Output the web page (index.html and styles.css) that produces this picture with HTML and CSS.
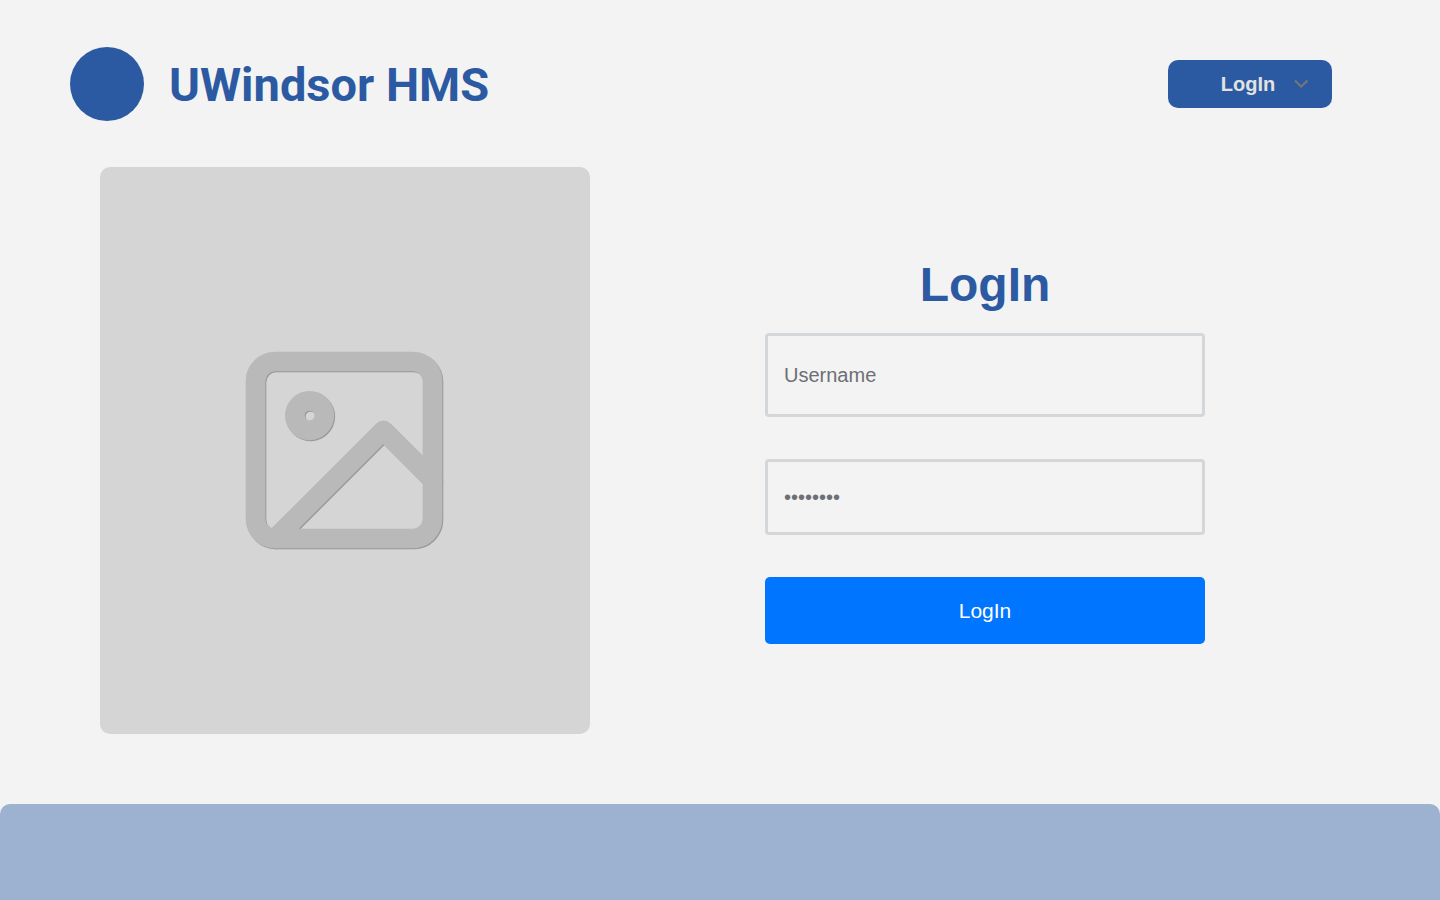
FILE: index.html
```html
<!DOCTYPE html>
<html lang="en">
<head>
<meta charset="utf-8">
<meta name="viewport" content="width=device-width, initial-scale=1">
<title>UWindsor HMS</title>
<link rel="stylesheet" href="styles.css">
</head>
<body>
<header class="header">
  <div class="brand">
    <span class="brand-mark"></span>
    <span class="brand-name">UWindsor HMS</span>
  </div>
  <div class="account">
    <select class="account-select" aria-label="Account">
      <option>LogIn</option>
    </select>
    <svg class="account-arrow" viewBox="0 0 16 16" aria-hidden="true"><path d="M2 4.500l6.200 6.200 6.200-6.200"/></svg>
  </div>
</header>
<main class="main">
  <div class="picture">
    <svg class="picture-icon" viewBox="0 0 24 24" aria-hidden="true">
      <rect x="3" y="3" width="18" height="18" rx="2"/>
      <circle cx="8.5" cy="8.5" r="1.5"/>
      <path d="M21 15l-5-5L5 21"/>
    </svg>
  </div>
  <form class="login">
    <h1 class="login-title">LogIn</h1>
    <input class="field field-user" type="text" placeholder="Username" aria-label="Username">
    <input class="field field-password" type="password" placeholder="••••••••" aria-label="Password">
    <button class="submit" type="submit">LogIn</button>
  </form>
</main>
<footer class="footer"></footer>
</body>
</html>
```
FILE: styles.css
```css
* { box-sizing: border-box; }

body {
  margin: 0;
  min-height: 100vh;
  display: flex;
  flex-direction: column;
  background: #f3f3f3;
  color: #2b5aa2;
  font-family: "Liberation Sans", Arial, sans-serif;
}

.header {
  display: flex;
  justify-content: space-between;
  align-items: center;
  padding: 47px 108px 46px 70px;
}

.brand {
  display: flex;
  align-items: center;
  gap: 25px;
}

.brand-mark {
  width: 74px;
  height: 74px;
  border-radius: 50%;
  background: #2b5aa2;
}

.brand-name {
  padding-top: 2px;
  font: bold 47px/56px Roboto, sans-serif;
}

.account { position: relative; }

.account-select {
  display: block;
  width: 164px;
  height: 48px;
  padding: 0 20px 0 16px;
  border: 0;
  border-radius: 10px;
  appearance: none;
  background: #2b5aa2;
  color: #e2e2e2;
  font: bold 20px/24px "Liberation Sans", Arial, sans-serif;
  text-align: center;
  text-align-last: center;
}

.account-arrow {
  position: absolute;
  top: 16px;
  right: 23px;
  width: 16px;
  height: 16px;
  fill: none;
  stroke: #777;
  stroke-width: 2;
  pointer-events: none;
}

.main {
  display: flex;
  flex-wrap: wrap;
  padding: 0 60px 70px 100px;
}

.picture {
  flex: 0 1 490px;
  display: flex;
  align-items: center;
  justify-content: center;
  padding: 165px 2px 166px 0;
  border-radius: 10px;
  background: #d5d5d5;
}

.picture-icon {
  width: 236px;
  height: 236px;
  fill: none;
  stroke: #b9b9b9;
  stroke-width: 2;
  stroke-linecap: round;
  stroke-linejoin: round;
  filter: drop-shadow(1px 1px 0 #999);
}

.login {
  flex: 0 1 440px;
  display: flex;
  flex-direction: column;
  margin: 0 auto;
  padding-top: 88px;
}

.login-title {
  margin: 0 0 18px;
  font-size: 48px;
  line-height: 60px;
  text-align: center;
}

.field {
  width: 100%;
  margin: 0 0 42px;
  padding: 0 16px;
  border: 3px solid #d3d7da;
  border-radius: 4px;
  background: transparent;
  color: #6c6f75;
  font: 20px/24px "Liberation Sans", Arial, sans-serif;
}

.field::placeholder {
  color: #6c6f75;
  opacity: 1;
}

.field-user { height: 84px; }
.field-password { height: 76px; }

.submit {
  height: 67px;
  border: 0;
  border-radius: 5px;
  background: #0075ff;
  color: #fff;
  font: 21px/24px "Liberation Sans", Arial, sans-serif;
}

.footer {
  flex: 1 0 96px;
  border-radius: 10px 10px 0 0;
  background: #9db1d1;
}
```
